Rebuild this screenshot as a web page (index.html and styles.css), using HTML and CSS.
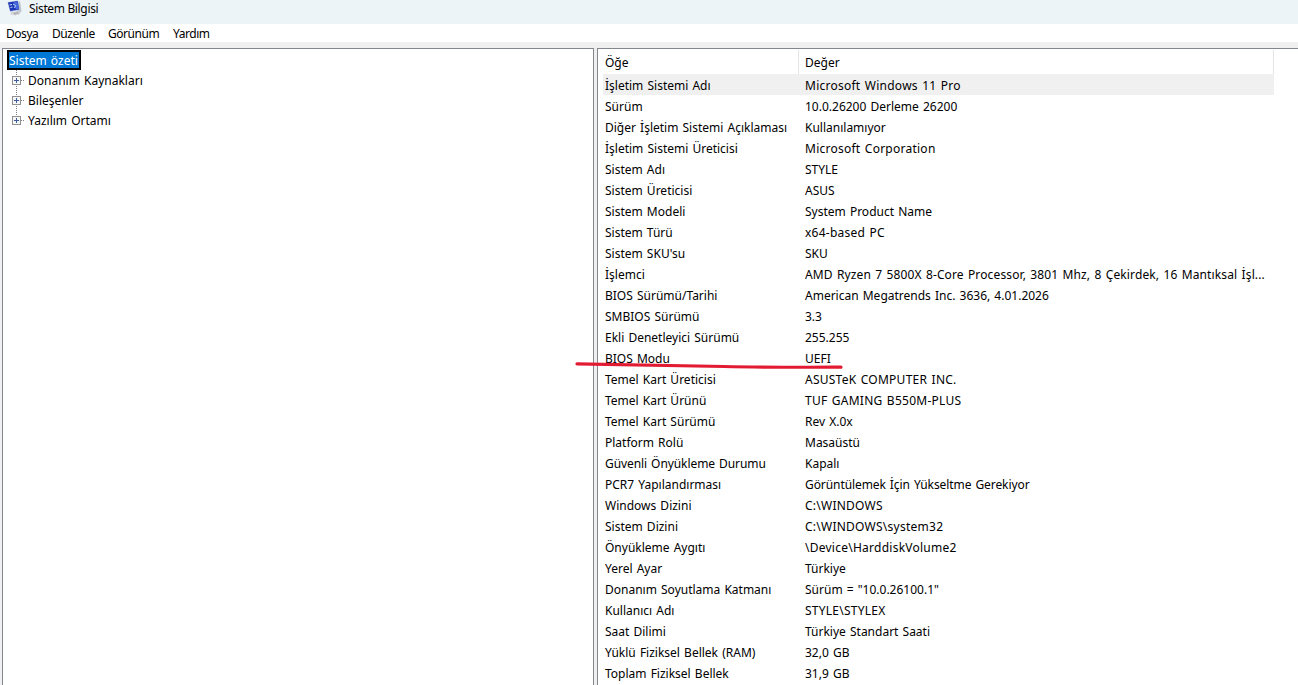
FILE: index.html
```html
<!DOCTYPE html>
<html lang="tr">
<head>
    <meta charset="UTF-8">
    <meta name="viewport" content="width=device-width, initial-scale=1.0">
    <title>Sistem Bilgisi</title>
    <link rel="stylesheet" href="styles.css">
</head>
<body>

    <header class="title-bar">
        <svg class="app-icon" width="16" height="16" viewBox="0 0 16 16">
            <path d="M10 3l3-2 1.500 10-3 4-2-2z" fill="#bfc3ca"/>
            <path d="M3.500 12.500l8-1.500 2 2-5 2.500-5-1z" fill="#d3d4d7"/>
            <path d="M6 13l5-1 1 1-4 1.500z" fill="#a9abb0"/>
            <path d="M.5 2L11 .5l1.800 9.500L3 12z" fill="#b7c3e3"/>
            <path d="M1 2.500L10.700 1l1.500 8.500L3.300 11z" fill="#1c35b5"/>
            <path d="M6.500 2l4-.6 1.300 7.600L9 9.500z" fill="#4468dc"/>
            <path d="M2.500 5l2.500-.5M3.500 7.500l2-.5M6 4l2.500 1.500-1 2.500" stroke="#c9dcff" fill="none"/>
        </svg>
        <span class="title">Sistem Bilgisi</span>
    </header>

    <nav class="menu">
        <span class="m1">Dosya</span>
        <span class="m2">Düzenle</span>
        <span class="m3">Görünüm</span>
        <span class="m4">Yardım</span>
    </nav>

    <main class="panes">
        <section class="tree">
            <div class="root">Sistem özeti</div>
            <ul>
                <li><i class="expander"></i><span>Donanım Kaynakları</span></li>
                <li><i class="expander"></i><span>Bileşenler</span></li>
                <li><i class="expander"></i><span>Yazılım Ortamı</span></li>
            </ul>
        </section>

        <section class="details">
            <div class="row head"><span>Öğe</span><span>Değer</span></div>
            <div class="row selected"><span>İşletim Sistemi Adı</span><span class="wide">Microsoft Windows 11 Pro</span></div>
            <div class="row"><span>Sürüm</span><span>10.0.26200 Derleme 26200</span></div>
            <div class="row"><span>Diğer İşletim Sistemi Açıklaması</span><span>Kullanılamıyor</span></div>
            <div class="row"><span>İşletim Sistemi Üreticisi</span><span class="wide">Microsoft Corporation</span></div>
            <div class="row"><span>Sistem Adı</span><span>STYLE</span></div>
            <div class="row"><span>Sistem Üreticisi</span><span>ASUS</span></div>
            <div class="row"><span>Sistem Modeli</span><span>System Product Name</span></div>
            <div class="row"><span>Sistem Türü</span><span class="wide">x64-based PC</span></div>
            <div class="row"><span>Sistem SKU'su</span><span>SKU</span></div>
            <div class="row"><span>İşlemci</span><span class="cpu">AMD Ryzen 7 5800X 8-Core Processor, 3801 Mhz, 8 Çekirdek, 16 Mantıksal İşl...</span></div>
            <div class="row"><span>BIOS Sürümü/Tarihi</span><span>American Megatrends Inc. 3636, 4.01.2026</span></div>
            <div class="row"><span>SMBIOS Sürümü</span><span>3.3</span></div>
            <div class="row"><span>Ekli Denetleyici Sürümü</span><span>255.255</span></div>
            <div class="row marked">
                <span>BIOS Modu</span><span>UEFI</span>
                <svg class="marker" width="272" height="12" viewBox="0 0 272 12">
                    <path d="M3 3.800C60 4.500 110 5.500 150 6.500S230 7.300 267 7.200" fill="none" stroke="#e31b32" stroke-width="3.200" stroke-linecap="round"/>
                </svg>
            </div>
            <div class="row"><span>Temel Kart Üreticisi</span><span class="wide">ASUSTeK COMPUTER INC.</span></div>
            <div class="row"><span>Temel Kart Ürünü</span><span class="wide">TUF GAMING B550M-PLUS</span></div>
            <div class="row"><span>Temel Kart Sürümü</span><span>Rev X.0x</span></div>
            <div class="row"><span>Platform Rolü</span><span>Masaüstü</span></div>
            <div class="row"><span class="tight">Güvenli Önyükleme Durumu</span><span>Kapalı</span></div>
            <div class="row"><span>PCR7 Yapılandırması</span><span class="tight">Görüntülemek İçin Yükseltme Gerekiyor</span></div>
            <div class="row"><span>Windows Dizini</span><span class="wide">C:\WINDOWS</span></div>
            <div class="row"><span>Sistem Dizini</span><span class="wide">C:\WINDOWS\system32</span></div>
            <div class="row"><span>Önyükleme Aygıtı</span><span class="wide">\Device\HarddiskVolume2</span></div>
            <div class="row"><span>Yerel Ayar</span><span>Türkiye</span></div>
            <div class="row"><span>Donanım Soyutlama Katmanı</span><span>Sürüm = "10.0.26100.1"</span></div>
            <div class="row"><span>Kullanıcı Adı</span><span class="wide">STYLE\STYLEX</span></div>
            <div class="row"><span>Saat Dilimi</span><span>Türkiye Standart Saati</span></div>
            <div class="row"><span>Yüklü Fiziksel Bellek (RAM)</span><span>32,0 GB</span></div>
            <div class="row"><span>Toplam Fiziksel Bellek</span><span>31,9 GB</span></div>
        </section>
    </main>

</body>
</html>
```
FILE: styles.css
```css
* {
    box-sizing: border-box;
}

body {
    margin: 0;
    height: 100vh;
    display: flex;
    flex-direction: column;
    overflow: hidden;
    background: #f0f0f0;
    color: #000;
    font-family: "Noto Sans", sans-serif;
    font-size: 12px;
    white-space: nowrap;
}

/* Title bar */
.title-bar {
    flex: none;
    height: 24px;
    padding: 0 0 0 7px;
    display: flex;
    background: #ecf4f8;
}

.app-icon {
    flex: none;
    margin-right: 6px;
}

.title {
    line-height: 18px;
    letter-spacing: -0.35px;
}

/* Menu */
.menu {
    flex: none;
    height: 18px;
    padding-left: 6px;
    display: flex;
    line-height: 20px;
    letter-spacing: -0.45px;
    background: #fff;
}

.m1 {
    width: 46px;
}

.m2 {
    width: 56px;
}

.m3 {
    width: 65px;
}

/* Panes */
.panes {
    flex: 1;
    min-height: 0;
    margin-top: 6px;
    padding-left: 2px;
    display: flex;
    gap: 3px;
    word-spacing: 1px;
}

.tree {
    width: 592px;
    padding: 1px 4px;
    background: #fff;
    border: 1px solid #828790;
    border-bottom: 0;
}

.root {
    width: 74px;
    height: 20px;
    border: 2px solid #000;
    background: #0078d7;
    color: #fff;
    line-height: 17px;
}

.tree ul {
    list-style: none;
    margin: 0;
    padding: 0 0 0 4px;
}

.tree li {
    height: 20px;
    display: flex;
    line-height: 22px;
    background: repeating-linear-gradient(to bottom, #808080 0 1px, transparent 1px 2px) 5px 0 / 1px 100% no-repeat;
}

.tree li:last-child {
    background-size: 1px 10px;
}

/* Plus box with the dotted connector to its label */
.expander {
    width: 17px;
    height: 20px;
    background:
        linear-gradient(#3f5c9f, #3f5c9f) 3px 10px / 5px 1px no-repeat,
        linear-gradient(#3f5c9f, #3f5c9f) 5px 8px / 1px 5px no-repeat,
        linear-gradient(#f6f6f6, #f6f6f6) 2px 7px / 7px 7px no-repeat,
        linear-gradient(#919191, #919191) 1px 6px / 9px 9px no-repeat,
        repeating-linear-gradient(to right, #808080 0 1px, transparent 1px 2px) 10px 10px / 4px 1px no-repeat;
}

/* Details */
.details {
    flex: 1;
    padding: 1px 0 0 5px;
    background: #fff;
    border-top: 1px solid #828790;
    border-left: 1px solid #828790;
}

.row {
    width: 671px;
    height: 21px;
    display: flex;
    line-height: 24px;
}

.row span {
    flex: none;
    padding-left: 2px;
}

.row span:first-child {
    width: 200px;
}

.row .wide {
    letter-spacing: 0.25px;
}

.row .cpu {
    letter-spacing: 0.13px;
}

.row .tight {
    letter-spacing: -0.08px;
}

.head {
    height: 24px;
    line-height: 25px;
    background: linear-gradient(#e5e5e5, #e5e5e5) 195px 0 / 1px 100% no-repeat;
    border-right: 1px solid #e5e5e5;
}

.selected {
    background: #f0f0f0;
}

/* Red underline drawn across the row */
.marked {
    position: relative;
}

.marker {
    position: absolute;
    left: -29px;
    top: 13px;
}
```
